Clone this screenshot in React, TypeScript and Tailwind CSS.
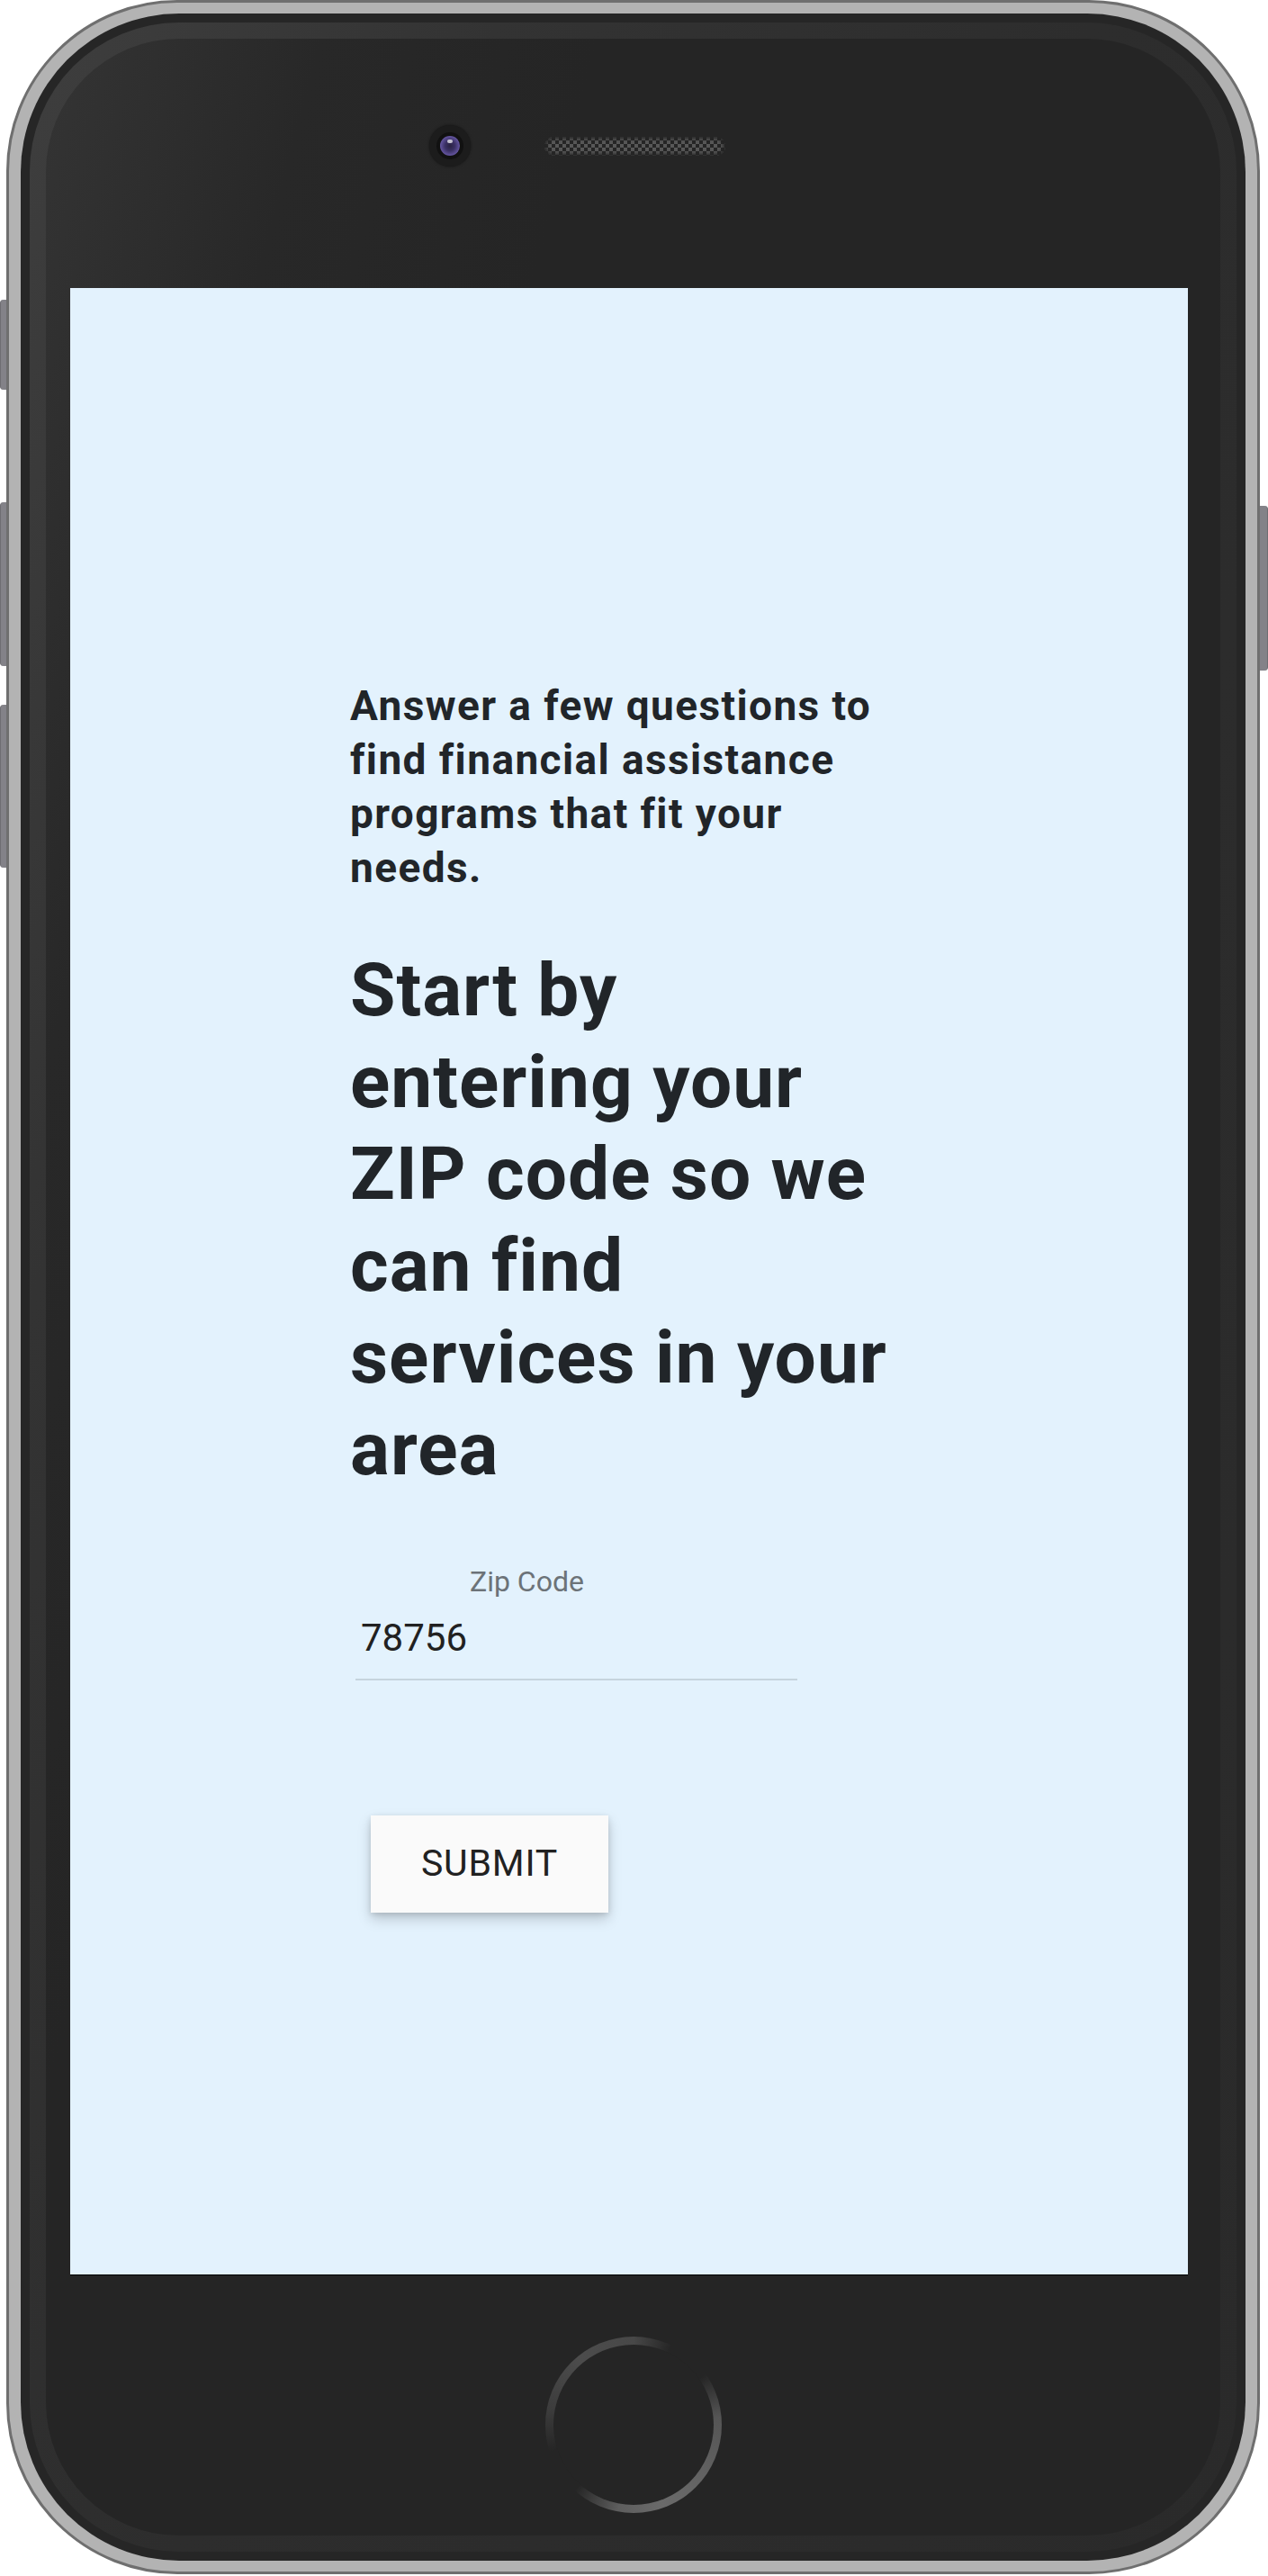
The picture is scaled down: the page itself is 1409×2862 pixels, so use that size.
import React from "react";

function SideButton({ className }: { className: string }) {
  return <div className={className} />;
}

function Camera() {
  return (
    <div className="flex h-[46px] w-[46px] items-center justify-center rounded-full bg-[#1c1c1c] shadow-[0_0_3px_rgba(0,0,0,0.5)]">
      <div className="flex h-[30px] w-[30px] items-center justify-center rounded-full bg-[#111111]">
        <div className="relative h-[22px] w-[22px] rounded-full bg-[image:radial-gradient(circle,#2a2342_0%,#3a3064_35%,#6455a0_70%,#4a3d7a_100%)]">
          <div className="absolute left-[8px] top-[4px] h-[4px] w-[6px] rounded-full bg-white/70" />
        </div>
      </div>
    </div>
  );
}

function Speaker() {
  return (
    <div className="h-[21px] w-[201px] rounded-full bg-[image:repeating-conic-gradient(#5e5e5e_0%_25%,#262626_0%_50%)] bg-[length:8px_8px] bg-size-[8px_8px] opacity-90 shadow-[inset_0_0_4px_2px_#252525]" />
  );
}

function HomeButton() {
  return (
    <div className="mx-auto mt-[68px] h-[196px] w-[196px] rounded-full bg-[image:conic-gradient(from_0deg,#484848_0deg,#252525_26deg,#252525_55deg,#555555_85deg,#636363_130deg,#6a6a6a_160deg,#5e5e5e_190deg,#252525_222deg,#252525_252deg,#3c3c3c_280deg,#4c4c4c_320deg,#484848_360deg)] p-[9px]">
      <div className="h-full w-full rounded-full bg-[#252525]" />
    </div>
  );
}

function Screen() {
  return (
    <div className="ml-[27px] h-[2208px] w-[1242px] border-b border-black bg-[#e3f2fd] font-['Roboto',sans-serif]">
      <div className="mx-auto w-[620px] pt-[434px]">
        <p className="text-[46px] font-bold leading-[60px] tracking-[1.4px] text-[#212529]">
          Answer a few questions to find financial assistance programs that fit your needs.
        </p>
        <h1 className="mt-[55px] text-[82px] font-bold leading-[102px] tracking-[1px] text-[#212529]">
          Start by entering your ZIP code so we can find services in your area
        </h1>
        <div className="ml-[6px] mt-[80px] w-[491px] border-b-2 border-[#c6d4dd]">
          <div className="ml-[127px] text-[32px] leading-[32px] text-[#6c7378]">Zip Code</div>
          <div className="ml-[6px] mt-[22px] pb-[20px] text-[42px] leading-[50px] text-[#212121]">78756</div>
        </div>
        <button className="ml-[23px] mt-[150px] flex h-[108px] w-[264px] items-center justify-center bg-[#fafafa] text-[41px] tracking-[0.8px] text-[#212121] shadow-[0_7px_14px_rgba(0,0,0,0.18),0_2px_6px_rgba(0,0,0,0.12)]">
          SUBMIT
        </button>
      </div>
    </div>
  );
}

export default function App() {
  return (
    <div className="relative h-[2862px] w-[1409px] overflow-hidden bg-white">
      <SideButton className="absolute left-0 top-[333px] h-[100px] w-[14px] rounded-l-[4px] border-l border-[#6e6d72] bg-[#838288]" />
      <SideButton className="absolute left-0 top-[558px] h-[182px] w-[14px] rounded-l-[4px] border-l border-[#6e6d72] bg-[#838288]" />
      <SideButton className="absolute left-0 top-[783px] h-[181px] w-[14px] rounded-l-[4px] border-l border-[#6e6d72] bg-[#838288]" />
      <SideButton className="absolute right-0 top-[562px] h-[183px] w-[14px] rounded-r-[4px] border-r border-[#6e6d72] bg-[#838288]" />

      <div className="relative z-10 ml-[7px] h-[2860px] w-[1393px] rounded-[190px] border-[3px] border-[#6f6f6f] bg-[#b3b3b3] px-[13px] py-[12px]">
        <div className="h-full w-full rounded-[176px] bg-[#262626] p-[10px]">
          <div className="h-full w-full rounded-[166px] bg-[image:linear-gradient(110deg,#3e3e3e_0%,#333333_22%,#2d2d2d_50%,#2a2a2a_100%)] px-[18px] py-[18px]">
            <div className="flex h-full w-full flex-col rounded-[148px] bg-[image:linear-gradient(105deg,#343434_0%,#282828_15%,#252525_30%,#252525_100%)]">
              <div className="h-[277px]">
                <div className="ml-[426px] flex items-center gap-[82px] pt-[96px]">
                  <Camera />
                  <Speaker />
                </div>
              </div>
              <Screen />
              <HomeButton />
            </div>
          </div>
        </div>
      </div>
    </div>
  );
}
